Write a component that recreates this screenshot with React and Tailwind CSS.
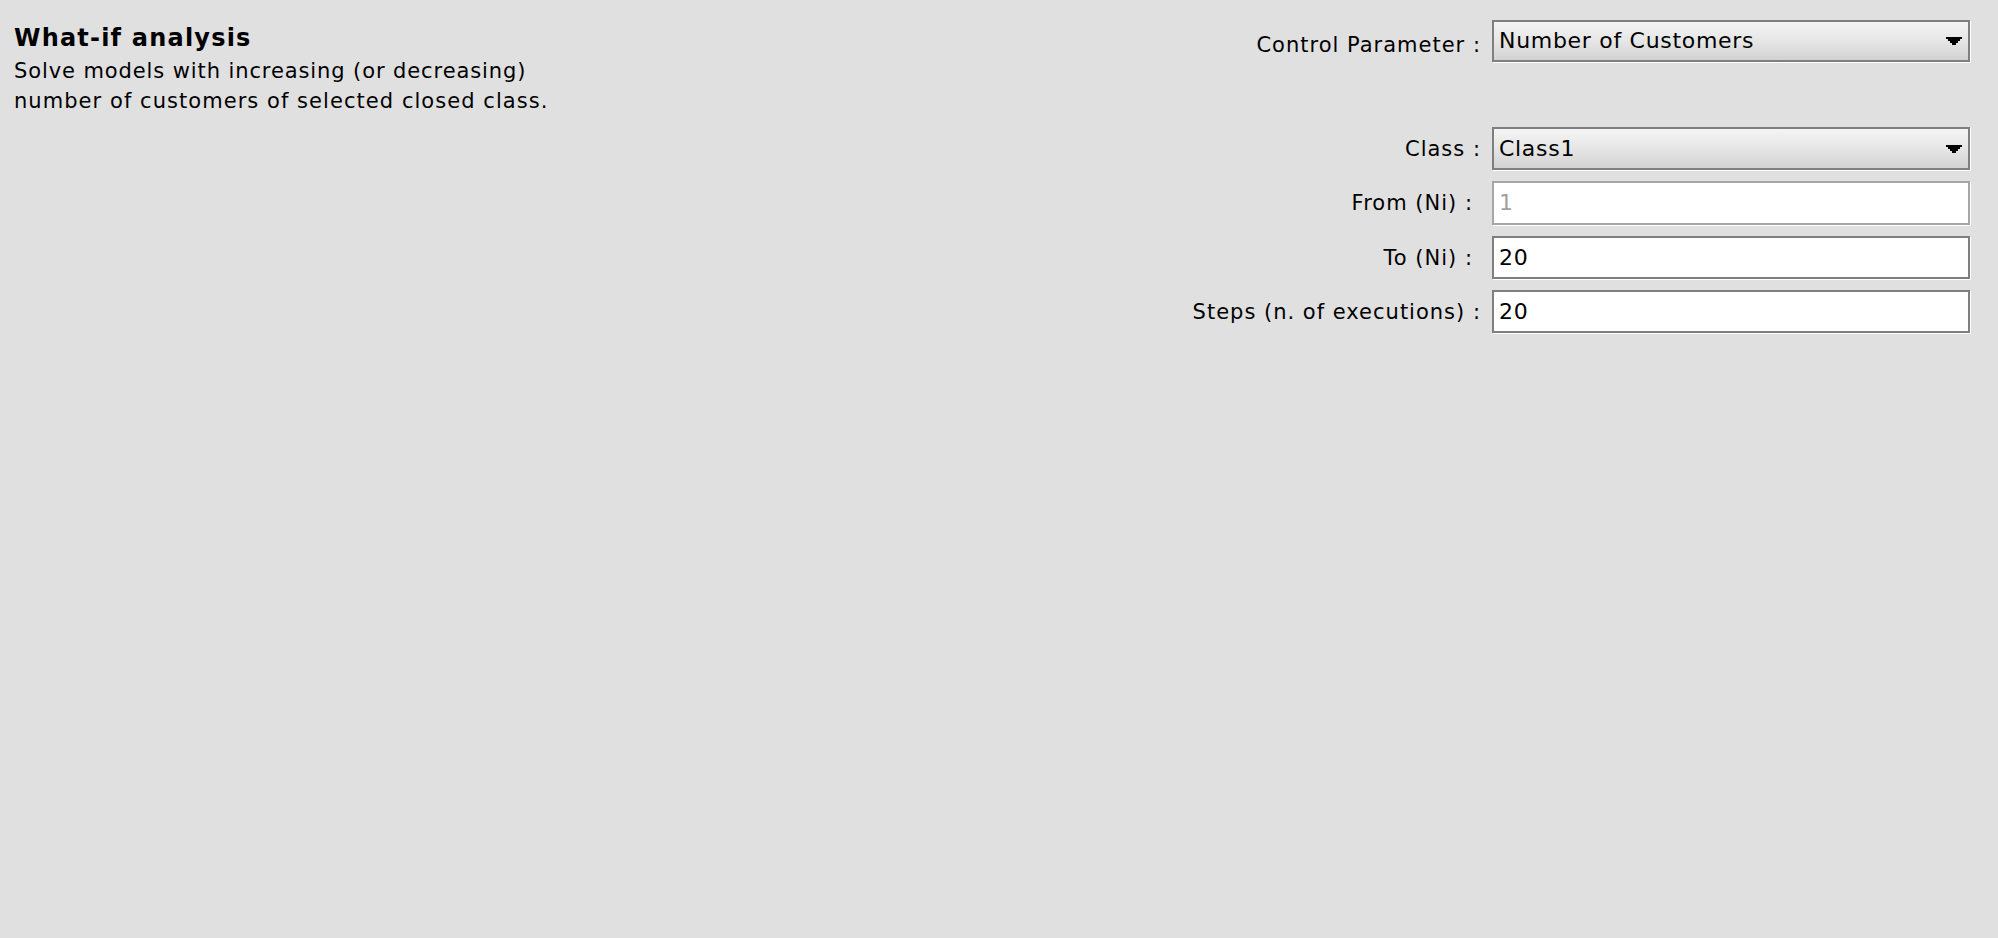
import React from 'react';

const FONT = { fontFamily: '"DejaVu Sans", "Liberation Sans", sans-serif' };

const Arrow = () => (
  <svg width="16" height="8" viewBox="0 0 16 8" className="shrink-0">
    <path d="M0 0H16V2H14V4H12V6H10V8H6V6H4V4H2V2H0Z" fill="#000" />
  </svg>
);

const Combo = ({ value, tall }) => (
  <div
    className={
      (tall ? 'h-[43px] ' : 'h-[42px] ') +
      'w-[478px] border-2 border-[#7f7f7f] shadow-[1px_1px_0_#ffffff] bg-gradient-to-b from-[#f4f4f4] via-[#e6e6e6] to-[#d2d2d2] flex items-center justify-between pl-[5px] pr-[6px]'
    }
  >
    <span className="text-[22px] tracking-[0.7px] text-black leading-none">{value}</span>
    <Arrow />
  </div>
);

const Field = ({ value, disabled }) => (
  <div
    className={
      disabled
        ? 'w-[478px] h-[44px] border-2 border-[#a6a6a6] bg-white shadow-[1px_1px_0_#ffffff] flex items-center pl-[5px]'
        : 'w-[478px] h-[43px] border-2 border-[#7f7f7f] bg-white shadow-[1px_1px_0_#ffffff] flex items-center pl-[5px]'
    }
  >
    <span
      className={
        disabled
          ? 'text-[22px] tracking-[0.7px] text-[#a0a0a0] leading-none'
          : 'text-[22px] tracking-[0.7px] text-black leading-none'
      }
    >
      {value}
    </span>
  </div>
);

const Row = ({ label, narrow, low, children }) => (
  <div className="flex items-center justify-end">
    <span
      className={
        'text-[21px] tracking-[1px] text-black ' +
        (narrow ? 'mr-[19px] ' : 'mr-[11px] ') +
        (low ? 'pt-[10px]' : 'pt-[2px]')
      }
    >
      {label}
    </span>
    {children}
  </div>
);

export default function App() {
  return (
    <div className="w-[1998px] h-[938px] bg-[#e0e0e0] flex justify-between" style={FONT}>
      <div className="pl-[14px] pt-[23px]">
        <h1 className="text-[24px] tracking-[1.2px] font-bold leading-[30px] text-black">What-if analysis</h1>
        <p className="mt-[3px] text-[21px] tracking-[0.9px] leading-[30px] text-black">
          Solve models with increasing (or decreasing)
          <br />
          <span className="tracking-[1.05px]">number of customers of selected closed class.</span>
        </p>
      </div>

      <div className="pt-[20px] pr-[28px] flex flex-col">
        <Row label="Control Parameter :" low>
          <Combo value="Number of Customers" />
        </Row>
        <div className="mt-[65px] flex flex-col gap-[11px]">
          <Row label="Class :">
            <Combo value="Class1" tall />
          </Row>
          <Row label="From (Ni) :" narrow>
            <Field value="1" disabled />
          </Row>
          <Row label="To (Ni) :" narrow>
            <Field value="20" />
          </Row>
          <Row label="Steps (n. of executions) :">
            <Field value="20" />
          </Row>
        </div>
      </div>
    </div>
  );
}
